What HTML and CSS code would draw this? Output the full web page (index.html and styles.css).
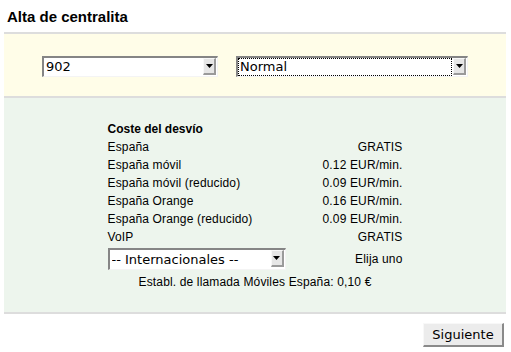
FILE: index.html
```html
<!DOCTYPE html>
<html lang="es">
<head>
<meta charset="utf-8">
<title>Alta de centralita</title>
<link rel="stylesheet" href="styles.css">
</head>
<body>
<h1 class="title">Alta de centralita</h1>
<div class="panel">
  <div class="sec sec-yellow">
    <span class="sel sel-prefix">
      <select class="sel-box"><option>902</option></select>
      <span class="sel-btn"><svg width="7" height="4" viewBox="0 0 7 4"><polygon points="0,0 7,0 3.5,4" fill="#000"/></svg></span>
    </span>
    <span class="sel sel-type sel-focus">
      <select class="sel-box"><option>Normal</option></select>
      <span class="sel-btn"><svg width="7" height="4" viewBox="0 0 7 4"><polygon points="0,0 7,0 3.5,4" fill="#000"/></svg></span>
    </span>
  </div>
  <div class="sec sec-green">
    <div class="cost">
      <div class="row row-head">Coste del desvío</div>
      <div class="row"><span>España</span><span>GRATIS</span></div>
      <div class="row"><span>España móvil</span><span>0.12 EUR/min.</span></div>
      <div class="row"><span>España móvil (reducido)</span><span>0.09 EUR/min.</span></div>
      <div class="row"><span>España Orange</span><span>0.16 EUR/min.</span></div>
      <div class="row"><span>España Orange (reducido)</span><span>0.09 EUR/min.</span></div>
      <div class="row"><span>VoIP</span><span>GRATIS</span></div>
      <div class="row row-sel">
        <span class="sel sel-intl">
          <select class="sel-box"><option>-- Internacionales --</option></select>
          <span class="sel-btn"><svg width="7" height="4" viewBox="0 0 7 4"><polygon points="0,0 7,0 3.5,4" fill="#000"/></svg></span>
        </span>
        <span>Elija uno</span>
      </div>
      <div class="row row-center">Establ. de llamada Móviles España: 0,10 €</div>
    </div>
  </div>
  <div class="actions">
    <button class="btn" type="button">Siguiente</button>
  </div>
</div>
</body>
</html>
```
FILE: styles.css
```css
html, body {
  margin: 0;
  padding: 0;
  background: #ffffff;
}
body {
  padding: 0 5px 0 4px;
  font-family: "Liberation Sans", Arial, sans-serif;
  color: #000;
}
.title {
  margin: 8px 0 6px 3px;
  font-size: 15px;
  line-height: 18px;
  font-weight: bold;
}
.panel {
  width: 502px;
}
.sec {
  border-top: 2px solid #dddddd;
}
.sec-yellow {
  background: #fffde8;
  display: flex;
  justify-content: center;
  gap: 18px;
  padding: 22px 0 19px;
}
.sec-green {
  background: #edf5ed;
  border-bottom: 2px solid #dddddd;
  padding: 22px 0 21px;
}
.sel {
  position: relative;
  display: inline-block;
  height: 22px;
}
.sel-box {
  -webkit-appearance: none;
  appearance: none;
  box-sizing: border-box;
  width: 100%;
  height: 100%;
  margin: 0;
  padding: 0 16px 0 2px;
  border-style: solid;
  border-width: 2px 1px 1px 2px;
  border-color: #858585 #f4f4f4 #f4f4f4 #858585;
  border-radius: 0;
  background: #ffffff;
  font-family: "DejaVu Sans", sans-serif;
  font-size: 13px;
  letter-spacing: 0;
  line-height: 18px;
  color: #000;
  outline: none;
}
.sel-btn {
  position: absolute;
  top: 2px;
  right: 2px;
  width: 13px;
  height: 17px;
  box-sizing: border-box;
  background: #e6e6e6;
  border-style: solid;
  border-width: 1px 2px 2px 1px;
  border-color: #f8f8f8 #9a9a9a #9a9a9a #f8f8f8;
  display: flex;
  align-items: center;
  justify-content: center;
  pointer-events: none;
}
.sel-focus::after {
  content: "";
  position: absolute;
  left: 2px;
  top: 2px;
  right: 16px;
  bottom: 1px;
  border: 1px dotted #000;
  pointer-events: none;
}
.sel-prefix { width: 176px; height: 21px; }
.sel-type { width: 232px; height: 21px; }
.sel-intl { width: 178px; }
.cost {
  width: 295px;
  margin: 0 auto;
  font-size: 12px;
  letter-spacing: 0.15px;
}
.row {
  display: flex;
  justify-content: space-between;
  align-items: center;
  height: 18px;
  line-height: 18px;
}
.row-head {
  font-weight: bold;
  letter-spacing: 0;
}
.row-sel {
  height: 27px;
  align-items: flex-start;
  padding-top: 2px;
  box-sizing: border-box;
  line-height: 22px;
}
.row-center {
  justify-content: center;
}
.actions {
  display: flex;
  justify-content: flex-end;
  padding: 9px 2px 0 0;
}
.btn {
  width: 81px;
  height: 24px;
  margin: 0;
  padding: 0;
  font-family: "DejaVu Sans", sans-serif;
  font-size: 13px;
  color: #000;
  background: #ececec;
  border-style: solid;
  border-width: 1px 2px 2px 1px;
  border-color: #f8f8f8 #8a8a8a #8a8a8a #f8f8f8;
  border-radius: 0;
}
```
